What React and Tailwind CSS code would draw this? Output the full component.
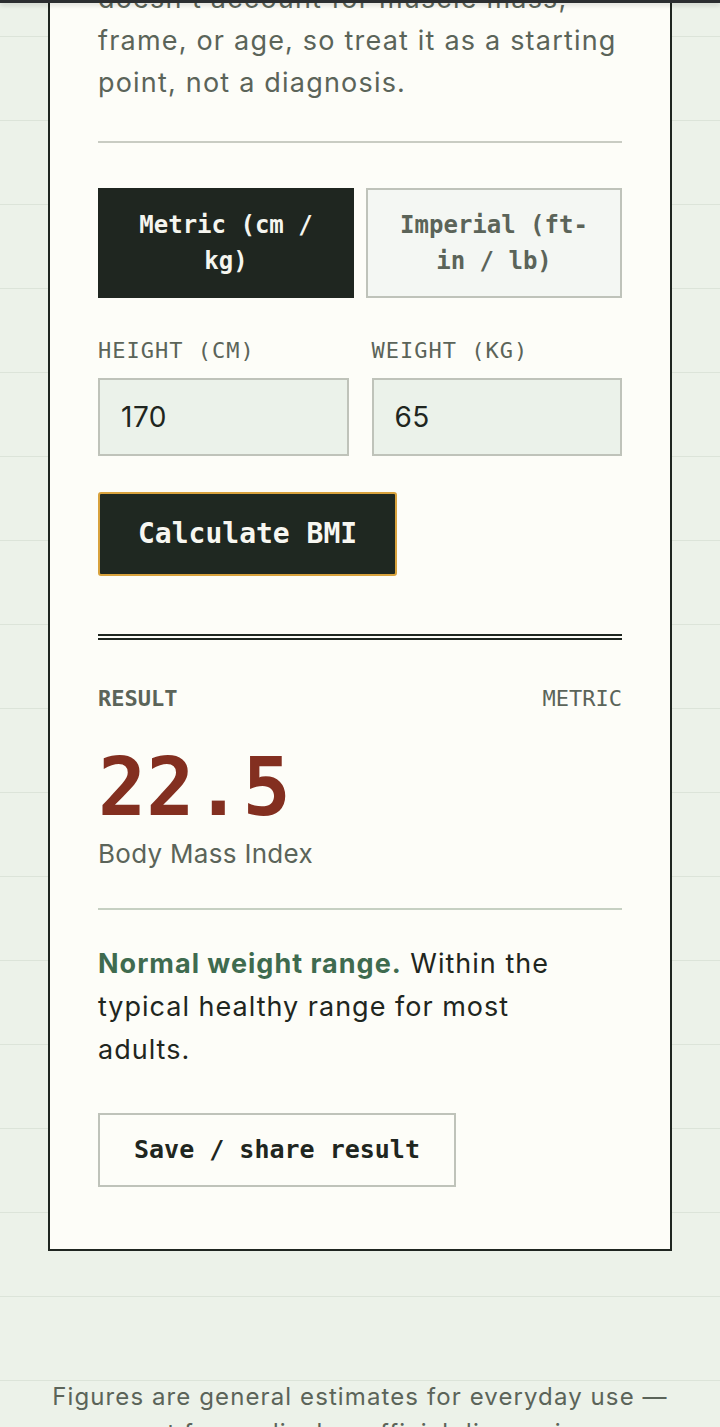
import React from 'react';

const mono = "font-['DejaVu_Sans_Mono','Liberation_Mono',monospace]";

export default function App() {
  return (
    <div className="min-h-screen bg-[#ecf2e9] bg-[repeating-linear-gradient(to_bottom,transparent_0,transparent_83px,#dce4d9_83px,#dce4d9_84px)] bg-[position:0_-47px] px-12 pb-10 font-['Inter','Noto_Sans',sans-serif] overflow-hidden">
      <div className="fixed top-0 left-0 right-0 h-[3px] bg-[#2b2e30] shadow-[0_2px_5px_rgba(0,0,0,0.18)] z-10" />

      <div className="-mt-[72px] border-2 border-[#1f2620] bg-[#fdfdf8] px-12 pt-12 pb-[62px]">
        <p className="text-[27px] leading-[42px] text-[#5b6459] tracking-[1.2px]">
          doesn't account for muscle mass,<br />
          frame, or age, so treat it as a starting<br />
          point, not a diagnosis.
        </p>

        <div className="mt-[37px] mb-[45px] border-t-2 border-[#c9ccc3]" />

        <div className="grid grid-cols-2 gap-3">
          <button className={`${mono} border-2 border-[#1f2620] bg-[#1f2620] px-6 py-[17px] text-[24px] leading-[36px] font-bold text-[#f5f5ef]`}>
            Metric (cm / kg)
          </button>
          <button className={`${mono} border-2 border-[#bfc3ba] bg-[#f4f7f3] px-6 py-[17px] text-[24px] leading-[36px] font-bold text-[#5b6459]`}>
            Imperial (ft-in / lb)
          </button>
        </div>

        <div className="mt-[38px] grid grid-cols-2 gap-[23px]">
          <label className="flex flex-col gap-3">
            <span className={`${mono} text-[22px] leading-[30px] tracking-[1px] text-[#5b6459]`}>HEIGHT (CM)</span>
            <input
              defaultValue="170"
              className="h-[78px] w-full border-2 border-[#bfc3ba] bg-[#ebf2ea] px-[21px] text-[28px] tracking-[0.5px] text-[#1f2620] outline-none"
            />
          </label>
          <label className="flex flex-col gap-3">
            <span className={`${mono} text-[22px] leading-[30px] tracking-[1px] text-[#5b6459]`}>WEIGHT (KG)</span>
            <input
              defaultValue="65"
              className="h-[78px] w-full border-2 border-[#bfc3ba] bg-[#ebf2ea] px-[21px] text-[28px] tracking-[0.5px] text-[#1f2620] outline-none"
            />
          </label>
        </div>

        <button className={`${mono} mt-9 rounded-[3px] border-2 border-[#d8a23d] bg-[#1f2821] px-[38px] py-[22px] text-[28px] leading-[36px] font-bold text-[#f7f7f1]`}>
          Calculate BMI
        </button>

        <div className="mt-[58px] border-t-[6px] border-double border-[#1f2620]" />

        <div className={`${mono} mt-[44px] flex justify-between text-[22px] leading-[30px] font-bold text-[#5b6459]`}>
          <span>RESULT</span>
          <span className="font-normal">METRIC</span>
        </div>

        <div className={`${mono} mt-[34px] text-[80px] leading-none font-bold text-[#832f20]`}>22.5</div>
        <div className="mt-[6px] text-[26px] leading-[39px] tracking-[0.3px] text-[#5b6459]">Body Mass Index</div>

        <div className="mt-[35px] border-t-2 border-[#c6d0c2]" />

        <p className="mt-[32px] max-w-[490px] text-[27px] leading-[43px] tracking-[1px] text-[#1f2620]">
          <strong className="font-bold text-[#3f6b4f]">Normal weight range.</strong> Within the typical healthy range for most adults.
        </p>

        <button className={`${mono} mt-[42px] border-2 border-[#bfc3ba] bg-[#fdfdf8] px-[34px] py-[18px] text-[25px] leading-[34px] font-bold text-[#1f2620]`}>
          Save / share result
        </button>
      </div>

      <footer className="mt-[128px] text-center text-[24px] leading-[36px] tracking-[1.1px] text-[#5b6459]">
        Figures are general estimates for everyday use — not for medical or official diagnosis.
      </footer>
    </div>
  );
}
